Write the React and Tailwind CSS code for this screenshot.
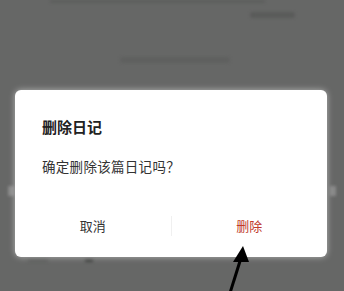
export default function App() {
  const font = { fontFamily: '"Noto Sans CJK SC", "Noto Sans", sans-serif' }
  return (
    <div className="relative h-[291px] w-[344px] overflow-hidden bg-[#666766]" style={font}>
      {/* blurred page behind the dialog */}
      <div className="flex h-full flex-col blur-[1.5px]">
        <div className="ml-[50px] h-[3px] w-[215px] bg-[#5d5e5d]" />
        <div className="ml-[250px] mt-[9px] h-[6px] w-[45px] rounded bg-[#5a5b5a]" />
        <div className="ml-[120px] mt-[39px] h-[6px] w-[110px] rounded bg-[#5f605f]" />
        <div className="mt-[123px] flex justify-between px-[8px]">
          <div className="h-[10px] w-[6px] bg-[#8a8a8a]" />
          <div className="h-[10px] w-[6px] bg-[#8a8a8a]" />
        </div>
        <div className="ml-[28px] mt-[62px] flex items-center gap-[37px]">
          <div className="h-[4px] w-[20px] bg-[#5a5b5a]" />
          <div className="h-[3px] w-[8px] bg-[#3f403f]" />
        </div>
      </div>

      {/* modal overlay */}
      <div className="absolute inset-0 pl-[15px] pr-[17px] pt-[90px]">
        <div className="flex h-[167px] flex-col rounded-[6px] bg-white shadow-[0_0_6px_rgba(255,255,255,0.5)]">
          <div className="pl-[27px] pt-[26px] text-[15px] font-bold leading-[22px] text-[#222]">删除日记</div>
          <div className="pl-[27px] pt-[18px] text-[13.5px] leading-[20px] tracking-[0.3px] text-[#333]">确定删除该篇日记吗？</div>
          <div className="mt-auto flex h-[58px] items-center pb-[4px]">
            <div className="flex flex-1 justify-center text-[13px] text-[#333]">取消</div>
            <div className="h-[20px] w-px bg-[#f0f0f0]" />
            <div className="flex flex-1 justify-center text-[13px] text-[#c0392b]">删除</div>
          </div>
        </div>
      </div>

      <svg className="absolute left-0 top-0" width="344" height="291" viewBox="0 0 344 291">
        <line x1="230" y1="293" x2="241" y2="258" stroke="#000" strokeWidth="3" />
        <polygon points="243,246 233,262 249,262" fill="#000" />
      </svg>
    </div>
  )
}
